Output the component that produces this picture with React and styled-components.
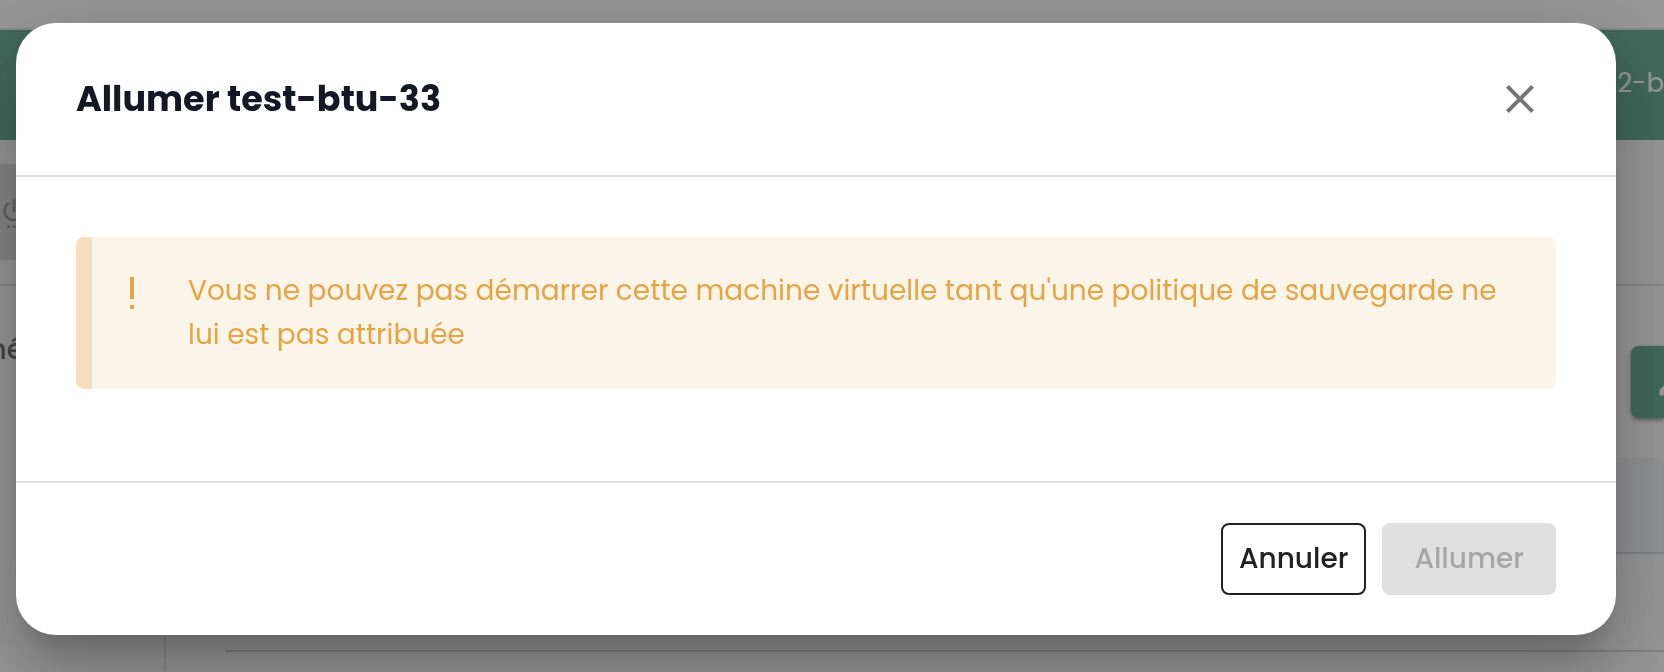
import React from "react";
import styled, { createGlobalStyle } from "styled-components";

const GlobalStyle = createGlobalStyle`
  *, *::before, *::after { box-sizing: border-box; }
  body {
    margin: 0;
    background: #fff;
    color: #212121;
    font-family: Poppins, Inter, "Liberation Sans", sans-serif;
    font-size: 28px;
    line-height: 44px;
  }
`;

const Page = styled.div`
  display: flex;
  flex-direction: column;
  height: 100vh;
  overflow: hidden;
  background: #fbfbfb;
`;

const TopStrip = styled.div`
  flex: none;
  height: 30px;
  border-bottom: 2px solid #e0e0e0;
`;

const Banner = styled.header`
  flex: none;
  display: flex;
  align-items: center;
  justify-content: flex-end;
  height: 110px;
  padding-bottom: 4px;
  background: #6eae99;
  color: #fff;
  font-size: 26px;
  white-space: nowrap;
`;

const Toolbar = styled.div`
  flex: none;
  display: flex;
  padding: 24px 0;
  border-bottom: 2px solid #e0e0e0;
`;

const PowerButton = styled.button`
  display: flex;
  align-items: center;
  justify-content: flex-start;
  width: 160px;
  height: 96px;
  padding: 0;
  border: 0;
  background: #e0e0e0;
  color: #a6a6a6;
`;

const Columns = styled.div`
  flex: 1;
  display: flex;
`;

const Sidebar = styled.aside`
  flex: none;
  width: 166px;
  padding-top: 42px;
  border-right: 2px solid #e8e8e8;
`;

const SidebarLabel = styled.div`
  display: flex;
  justify-content: flex-end;
  width: 24px;
  color: #757575;
  font-weight: 500;
`;

const Content = styled.main`
  flex: 1;
  padding: 60px 0 0 60px;
`;

const ContentHead = styled.div`
  display: flex;
  justify-content: flex-end;
  margin-bottom: 40px;
`;

const EditButton = styled.button`
  width: 33px;
  height: 72px;
  padding: 0 0 0 24px;
  display: flex;
  align-items: center;
  overflow: hidden;
  border: 0;
  border-radius: 8px 0 0 8px;
  background: #6eae99;
  color: #fff;
  box-shadow: 0 2px 4px rgba(0, 0, 0, 0.4);
`;

const ListRow = styled.div`
  height: ${(p) => (p.$head ? 96 : 98)}px;
  border-bottom: 2px solid #d6d6d6;
  background: ${(p) => (p.$head ? "#f3f4f8" : "transparent")};
`;

const Icon = styled.svg`
  flex: none;
  display: block;
  width: ${(p) => p.$size}px;
  height: ${(p) => p.$size}px;
  fill: currentColor;
`;

const Overlay = styled.div`
  position: fixed;
  inset: 0;
  padding: 23px 48px 37px 16px;
  background: rgba(0, 0, 0, 0.4);
`;

const Dialog = styled.section`
  border-radius: 40px;
  background: #fff;
  box-shadow:
    0 22px 30px -14px rgba(0, 0, 0, 0.2),
    0 48px 76px 6px rgba(0, 0, 0, 0.14),
    0 18px 92px 16px rgba(0, 0, 0, 0.12);
`;

const DialogHeader = styled.header`
  display: flex;
  align-items: center;
  justify-content: space-between;
  padding: 48px 72px 48px 60px;
  border-bottom: 2px solid #e0e0e0;
`;

const Title = styled.h2`
  margin: 0;
  color: #141824;
  font-size: 35px;
  font-weight: 700;
  line-height: 56px;
`;

const CloseButton = styled.button`
  padding: 0;
  border: 0;
  background: none;
  color: #757575;
`;

const DialogBody = styled.div`
  padding: 60px 60px 92px;
`;

const Alert = styled.div`
  display: flex;
  gap: 32px;
  padding: 32px 32px 32px 16px;
  border-left: 16px solid #f5dfbc;
  border-radius: 8px;
  background: #fbf4e8;
  color: #e5a544;
`;

const AlertText = styled.p`
  margin: 0;
`;

const DialogFooter = styled.footer`
  display: flex;
  justify-content: flex-end;
  gap: 16px;
  padding: 40px 60px;
  border-top: 2px solid #e0e0e0;
`;

const Button = styled.button`
  height: 72px;
  padding: 0 ${(p) => (p.$outlined ? 16 : 32)}px;
  border: ${(p) => (p.$outlined ? "2px solid #212121" : "0")};
  border-radius: 8px;
  background: ${(p) => (p.$outlined ? "#fff" : "#e0e0e0")};
  color: ${(p) => (p.$outlined ? "#212121" : "#a6a6a6")};
  font: inherit;
  font-weight: 500;
`;

export default function App() {
  return (
    <>
      <GlobalStyle />
      <Page aria-hidden="true">
        <TopStrip />
        <Banner>2-b</Banner>
        <Toolbar>
          <PowerButton disabled>
            <Icon $size={32} viewBox="1.5 0 24 24">
              <path d="M7 24h2v-2H7v2zm4 0h2v-2h-2v2zm2-22h-2v10h2V2zm3.56 2.44-1.45 1.45C16.84 6.94 18 8.83 18 11c0 3.31-2.69 6-6 6s-6-2.69-6-6c0-2.17 1.16-4.06 2.88-5.12L7.44 4.44C5.36 5.88 4 8.28 4 11c0 4.42 3.58 8 8 8s8-3.58 8-8c0-2.72-1.36-5.12-3.44-6.56zM15 24h2v-2h-2v2z" />
            </Icon>
          </PowerButton>
        </Toolbar>
        <Columns>
          <Sidebar>
            <SidebarLabel>né</SidebarLabel>
          </Sidebar>
          <Content>
            <ContentHead>
              <EditButton>
                <Icon $size={36} viewBox="0 0 24 24">
                  <path d="M3 17.25V21h3.75L17.81 9.94l-3.75-3.75L3 17.25zM20.71 7.04a1 1 0 0 0 0-1.41l-2.34-2.34a1 1 0 0 0-1.41 0l-1.83 1.83 3.75 3.75 1.83-1.83z" />
                </Icon>
              </EditButton>
            </ContentHead>
            <ListRow $head />
            <ListRow />
          </Content>
        </Columns>
      </Page>
      <Overlay>
        <Dialog role="dialog" aria-modal="true" aria-labelledby="dialog-title">
          <DialogHeader>
            <Title id="dialog-title">Allumer test-btu-33</Title>
            <CloseButton type="button" aria-label="Fermer">
              <Icon $size={48} viewBox="0 0 24 24">
                <path d="M19 6.41 17.59 5 12 10.59 6.41 5 5 6.41 10.59 12 5 17.59 6.41 19 12 13.41 17.59 19 19 17.59 13.41 12z" />
              </Icon>
            </CloseButton>
          </DialogHeader>
          <DialogBody>
            <Alert role="alert">
              <Icon $size={48} viewBox="0 0 48 48">
                <path d="M22 8h4v22h-4zM22 36h4v4h-4z" />
              </Icon>
              <AlertText>
                Vous ne pouvez pas démarrer cette machine virtuelle tant qu'une politique de sauvegarde ne lui est pas attribuée
              </AlertText>
            </Alert>
          </DialogBody>
          <DialogFooter>
            <Button type="button" $outlined>Annuler</Button>
            <Button type="button" disabled>Allumer</Button>
          </DialogFooter>
        </Dialog>
      </Overlay>
    </>
  );
}
